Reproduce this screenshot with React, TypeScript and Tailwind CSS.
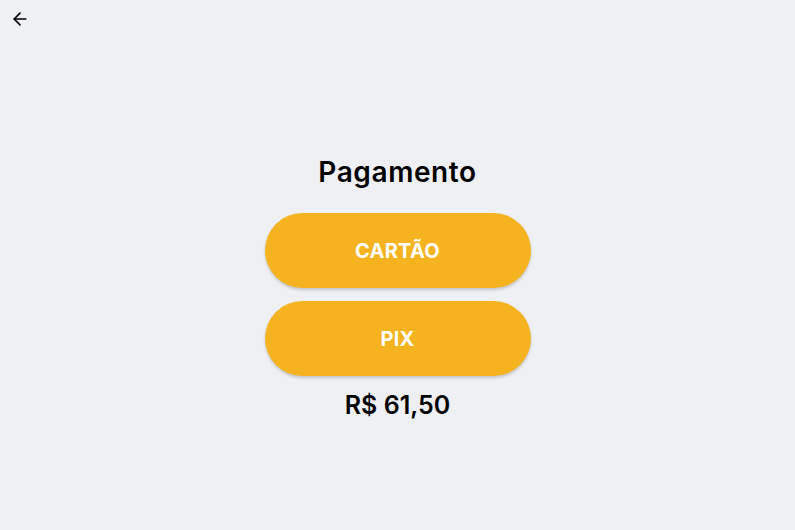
import { ArrowLeft } from 'lucide-react'

export default function App() {
  return (
    <div
      className="relative min-h-[530px] w-full bg-[#eff0f4] text-[#111]"
      style={{ fontFamily: 'Inter, "Noto Sans", sans-serif' }}
    >
      <button className="absolute left-[9px] top-[8px] p-[1px] text-black">
        <ArrowLeft className="h-[20px] w-[20px]" strokeWidth={2} />
      </button>

      <div className="flex flex-col items-center pt-[154px]">
        <h1 className="text-[28px] font-semibold leading-[36px] tracking-[0.6px] text-black">Pagamento</h1>

        <div className="mt-[23px] flex flex-col gap-[13px]">
          <button className="h-[75px] w-[266px] rounded-full bg-[#f5b31f] text-[20px] font-bold tracking-[0.3px] text-white shadow-[0_2px_3px_rgba(0,0,0,0.18)]">
            CARTÃO
          </button>
          <button className="h-[75px] w-[266px] rounded-full bg-[#f5b31f] text-[20px] font-bold tracking-[0.3px] text-white shadow-[0_2px_3px_rgba(0,0,0,0.18)]">
            PIX
          </button>
        </div>

        <div className="mt-[12px] text-[25px] font-semibold leading-[34px] text-black">R$ 61,50</div>
      </div>
    </div>
  )
}
